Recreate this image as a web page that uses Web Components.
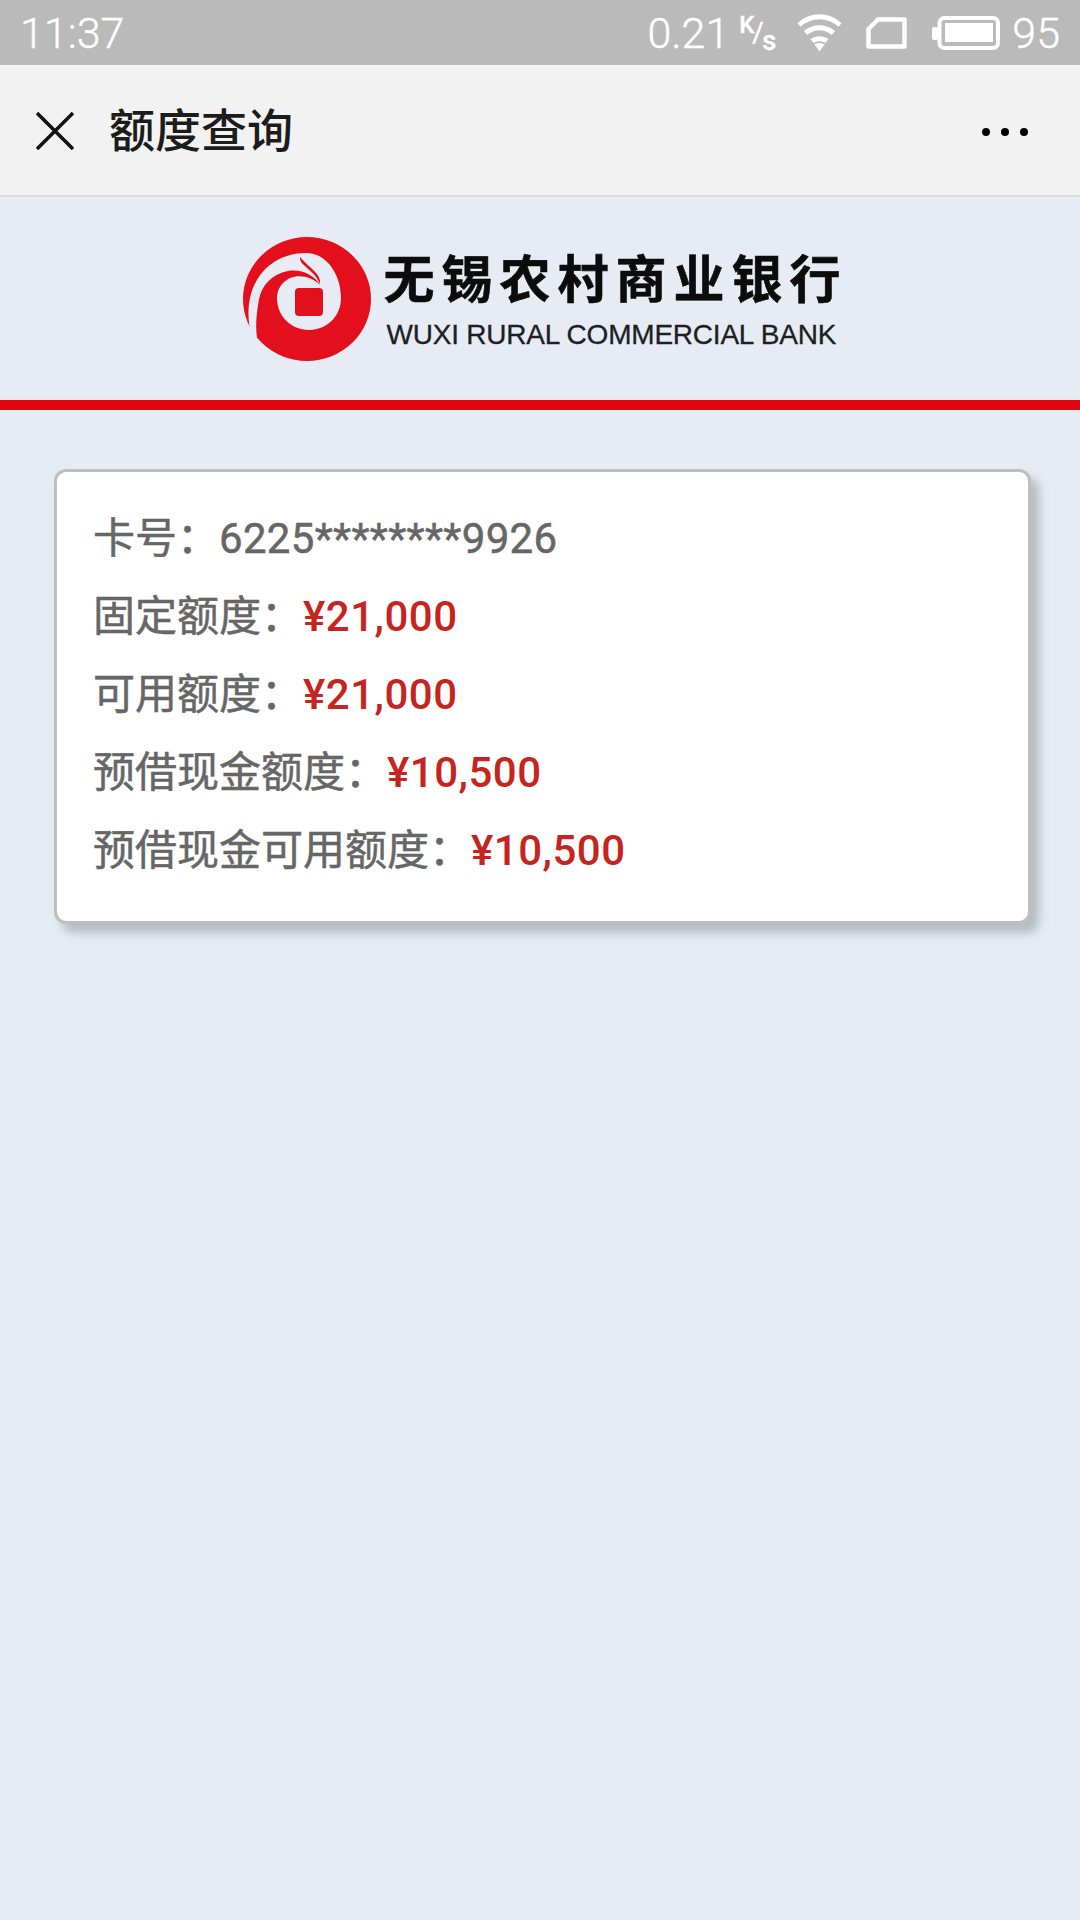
<!DOCTYPE html>
<html lang="zh">
<head>
<meta charset="utf-8">
<title>额度查询</title>
<style>
    html, body{
        margin: 0;
        padding: 0;
        background-color: #e7ebf3;
        font-family: Roboto, "Noto Sans CJK SC", sans-serif;
    }
    body{
        width: 1080px;
        height: 1920px;
        overflow: hidden;
    }
</style>
</head>
<body>
<status-bar></status-bar>
<title-bar>额度查询</title-bar>
<bank-logo></bank-logo>
<info-card>
    <info-row label="卡号：">6225********9926</info-row>
    <info-row label="固定额度：" money>¥21,000</info-row>
    <info-row label="可用额度：" money>¥21,000</info-row>
    <info-row label="预借现金额度：" money>¥10,500</info-row>
    <info-row label="预借现金可用额度：" money>¥10,500</info-row>
</info-card>

<script>
class StatusBar extends HTMLElement{
    constructor(){
        super();
        this.attachShadow({mode: 'open'});
        this.shadowRoot.innerHTML = `
        <style>
            :host{
                display: flex;
                align-items: center;
                height: 65px;
                padding: 1px 20px 0 20px;
                box-sizing: border-box;
                background-color: #bababa;
                color: #fff;
                font: 300 43px/1 Roboto, sans-serif;
                -webkit-text-stroke: 0.4px #fff;
            }
            .time{ flex: 1; }
            .speed{ display: flex; align-items: center; }
            .unit{
                font: 500 24px/1 Roboto, sans-serif;
                margin-left: 10px;
                width: 34px;
                height: 40px;
                position: relative;
            }
            .unit span{ position: absolute; }
            svg{ display: block; }
            .wifi{ margin-left: 24px; margin-top: -1px; }
            .sim{ margin-left: 24px; }
            .battery{ margin-left: 25px; }
            .level{ margin-left: 12px; }
        </style>
        <span class="time">11:37</span>
        <div class="speed">0.21
            <div class="unit"><span style="left:0;top:0">K</span><span style="left:13px;top:6px;font-weight:400;font-size:28px">/</span><span style="left:23px;top:15px;font-size:27px">s</span></div>
        </div>
        <svg class="wifi" width="45" height="38" viewBox="0 0 45 38" fill="none" stroke="#fff" stroke-width="5">
            <path d="M2 11C14 0 31 0 43 11"/>
            <path d="M8.5 19C17 12 28 12 36.500 19"/>
            <path d="M15 27C19 24 26 24 30 27"/>
            <path d="M17.500 30.500L22.500 37.500L27.500 30.500C24.500 28.500 20.500 28.500 17.500 30.500Z" fill="#fff" stroke="none"/>
        </svg>
        <svg class="sim" width="41" height="32" viewBox="0 0 41 32" fill="none" stroke="#fff" stroke-width="4.500" stroke-linejoin="round">
            <path d="M2.500 12L12 2.500H38.500V29.500H2.500Z"/>
        </svg>
        <svg class="battery" width="68" height="34" viewBox="0 0 68 34">
            <rect x="0" y="11" width="6" height="13" rx="2" fill="#fff"/>
            <rect x="7.500" y="2" width="58.500" height="30" rx="5" fill="none" stroke="#fff" stroke-width="4"/>
            <rect x="13" y="7" width="48" height="19" fill="#fff"/>
        </svg>
        <span class="level">95</span>`;
    }
}
customElements.define('status-bar', StatusBar);

class TitleBar extends HTMLElement{
    constructor(){
        super();
        this.attachShadow({mode: 'open'});
        this.shadowRoot.innerHTML = `
        <style>
            :host{
                display: flex;
                align-items: center;
                height: 128px;
                padding: 0 52px 0 36px;
                background-color: #f2f2f2;
                border-top: 2px solid #f7f7f7;
                border-bottom: 2px solid #d8dbe0;
                color: #1c1c1c;
            }
            svg{ display: block; }
            .title{
                flex: 1;
                margin-left: 35px;
                margin-top: -8px;
                font: 500 46px/1 "Noto Sans CJK SC", sans-serif;
            }
            .more{ display: flex; gap: 11px; margin-top: 1px; }
            .more i{
                width: 8px;
                height: 8px;
                border-radius: 50%;
                background-color: #000;
            }
        </style>
        <svg width="38" height="38" viewBox="0 0 38 38" stroke="#111" stroke-width="3.500"><path d="M1 1L37 37M37 1L1 37"/></svg>
        <div class="title"><slot></slot></div>
        <div class="more"><i></i><i></i><i></i></div>`;
    }
}
customElements.define('title-bar', TitleBar);

class BankLogo extends HTMLElement{
    constructor(){
        super();
        this.attachShadow({mode: 'open'});
        this.shadowRoot.innerHTML = `
        <style>
            :host{
                display: flex;
                justify-content: center;
                align-items: center;
                gap: 12px;
                height: 213px;
                box-sizing: border-box;
                padding-top: 1px;
                padding-left: 5px;
                border-bottom: 10px solid #e00512;
            }
            svg{ display: block; }
            .names{ width: 460px; color: #0c0c0c; margin-top: -3px; }
            .cn{
                font: 700 51px/60px "Noto Sans CJK SC", sans-serif;
                letter-spacing: 7px;
                white-space: nowrap;
                -webkit-text-stroke: 0.6px #0c0c0c;
            }
            .en{
                font: 400 28px/30px "Liberation Sans", sans-serif;
                letter-spacing: -0.220px;
                color: #1c1f24;
                white-space: nowrap;
                margin: 14px 0 0 3px;
                -webkit-text-stroke: 0.3px #1c1f24;
            }
        </style>
        <svg width="130" height="125" viewBox="12 12 130 125">
            <ellipse cx="77" cy="74" rx="64" ry="62" fill="#e30f1c"/>
            <path fill="#e7ebf3" d="M20 104C12 62 36 28 76 28C97 28 111 50 111 73C111 91 97 105 79 105C61 105 47 91 47 73C47 64 52 57 60 53C70 49 82 52 90 60C84 50 72 44 58 46C42 49 32 60 29 74C27 86 25 100 27 112L12 112Z"/>
            <path fill="#e30f1c" d="M70 32C69 41 84 44 90 59C92 49 78 42 70 32Z"/>
            <rect x="65" y="63" width="28" height="28" rx="4" fill="#e30f1c"/>
        </svg>
        <div class="names">
            <div class="cn">无锡农村商业银行</div>
            <div class="en">WUXI RURAL COMMERCIAL BANK</div>
        </div>`;
    }
}
customElements.define('bank-logo', BankLogo);

class InfoCard extends HTMLElement{
    constructor(){
        super();
        this.attachShadow({mode: 'open'});
        this.shadowRoot.innerHTML = `
        <style>
            :host{
                display: flex;
                flex-direction: column;
                box-sizing: border-box;
                width: 977px;
                height: 455px;
                margin: 59px 0 0 54px;
                padding: 28px 36px;
                background-color: #fff;
                border: 3px solid #bcc0bd;
                border-radius: 12px;
                box-shadow: 8px 9px 10px rgba(140,150,155,0.55);
            }
        </style>
        <slot></slot>`;
    }
}
customElements.define('info-card', InfoCard);

class InfoRow extends HTMLElement{
    constructor(){
        super();
        this.attachShadow({mode: 'open'});
    }
    connectedCallback(){
        this.shadowRoot.innerHTML = `
        <style>
            :host{
                display: block;
                height: 78px;
                font: 400 42px/78px Roboto, "Noto Sans CJK SC", sans-serif;
                color: #666;
                white-space: nowrap;
                -webkit-text-stroke: 0.5px #666;
            }
            .digits{ letter-spacing: 0.300px; }
            .money{
                color: #c7241f;
                font-weight: 500;
                letter-spacing: 0.500px;
                -webkit-text-stroke: 0;
            }
        </style>
        <span>${this.getAttribute('label')}</span><span class="${this.hasAttribute('money') ? 'money' : 'digits'}"><slot></slot></span>`;
    }
}
customElements.define('info-row', InfoRow);
</script>
</body>
</html>
